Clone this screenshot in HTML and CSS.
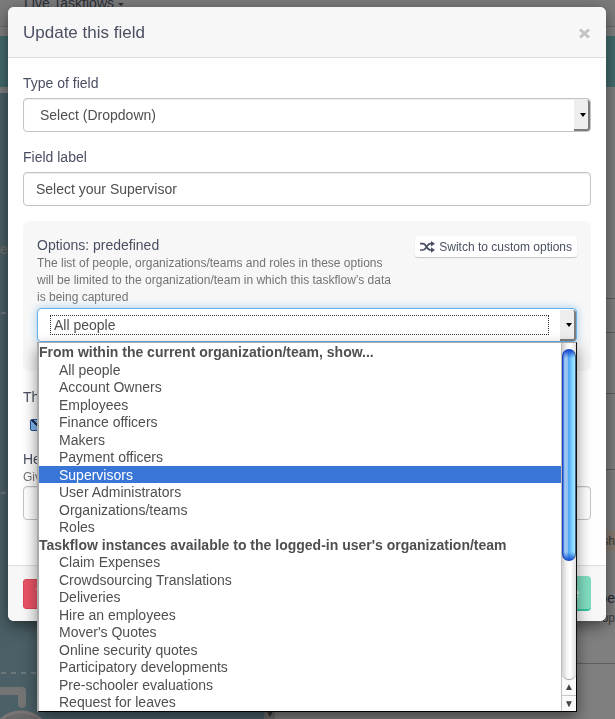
FILE: index.html
```html
<!DOCTYPE html>
<html lang="en">
<head>
  <meta charset="UTF-8" />
  <meta name="viewport" content="width=device-width, initial-scale=1.0"/>
  <title>Update this field</title>
  <link rel="stylesheet" href="styles.css">
</head>
<body>
  <!-- Page behind the modal -->
  <div class="page" aria-hidden="true">
    <div class="navbar">
      <span class="nav-item">Live Taskflows <i class="caret"></i></span>
    </div>
    <div class="banner"></div>
    <div class="workspace">
      <div class="canvas">
        <span class="canvas-text">er</span>
        <svg class="canvas-art" width="264" height="626" viewBox="0 0 264 626">
          <g stroke="#6c7779" stroke-width="2" stroke-dasharray="5 5">
            <path d="M1 220H264M1 400H264M1 580H264"/>
          </g>
          <path d="M-4 598H22V611" fill="none" stroke="#747474" stroke-width="8" stroke-linecap="round" stroke-linejoin="round"/>
          <circle cx="21" cy="649" r="30" fill="#696969" stroke="#7b7474" stroke-width="3"/>
        </svg>
      </div>
      <div class="canvas-scroll">▼</div>
      <div class="panel">
        <div class="panel-row row-intro"></div>
        <div class="panel-row row-short"></div>
        <div class="panel-row row-medium"></div>
        <div class="panel-row row-tall"></div>
        <div class="panel-row row-detail">
          <span class="tag">sh</span>
          <span class="detail-title">pe</span>
          <span class="detail-text">op</span>
        </div>
      </div>
    </div>
  </div>

  <div class="modal-wrap">
    <div class="modal" role="dialog" aria-labelledby="modal-title">
      <div class="modal-header">
        <h1 class="modal-title" id="modal-title">Update this field</h1>
        <button type="button" class="close" aria-label="Close">
          <svg width="13" height="13" viewBox="0 0 13 13"><path d="M2 2.500L11 10.500M11 2.500L2 10.500" stroke="#c3c3c3" stroke-width="3"/></svg>
        </button>
      </div>

      <form class="modal-body">
        <div class="form-group">
          <label class="form-label" for="field-type">Type of field</label>
          <div class="select-box">
            <select id="field-type" class="form-input form-select">
              <option>Select (Dropdown)</option>
            </select>
          </div>
        </div>

        <div class="form-group">
          <label class="form-label" for="field-label">Field label</label>
          <input type="text" id="field-label" class="form-input" value="Select your Supervisor" />
        </div>

        <div class="well">
          <div class="well-head">
            <div class="well-text">
              <label class="well-title" for="options-source">Options: predefined</label>
              <p class="help">The list of people, organizations/teams and roles in these options will be limited to the organization/team in which this taskflow’s data is being captured</p>
            </div>
            <button type="button" class="switch-btn">
              <svg width="15" height="12" viewBox="0 0 15 12">
                <path d="M0 2.700H3C6.500 2.700 6.500 9 10.500 9H11.500M0 9H3C6.500 9 6.500 2.700 10.500 2.700H11.500" fill="none" stroke="#4a5062" stroke-width="1.700"/>
                <path d="M11 0L15 2.700L11 5.400ZM11 6.300L15 9L11 11.700Z" fill="#4a5062"/>
              </svg>
              Switch to custom options
            </button>
          </div>

          <div class="select-box is-open">
            <select id="options-source" class="form-input form-select">
              <option>All people</option>
            </select>
            <div class="focus-ring"></div>
            <div class="popup">
              <ul class="popup-list" role="listbox" aria-label="Options">
                <li class="group">From within the current organization/team, show...</li>
                <li class="option" role="option">All people</li>
                <li class="option" role="option">Account Owners</li>
                <li class="option" role="option">Employees</li>
                <li class="option" role="option">Finance officers</li>
                <li class="option" role="option">Makers</li>
                <li class="option" role="option">Payment officers</li>
                <li class="option active" role="option" aria-selected="true">Supervisors</li>
                <li class="option" role="option">User Administrators</li>
                <li class="option" role="option">Organizations/teams</li>
                <li class="option" role="option">Roles</li>
                <li class="group">Taskflow instances available to the logged-in user's organization/team</li>
                <li class="option" role="option">Claim Expenses</li>
                <li class="option" role="option">Crowdsourcing Translations</li>
                <li class="option" role="option">Deliveries</li>
                <li class="option" role="option">Hire an employees</li>
                <li class="option" role="option">Mover's Quotes</li>
                <li class="option" role="option">Online security quotes</li>
                <li class="option" role="option">Participatory developments</li>
                <li class="option" role="option">Pre-schooler evaluations</li>
                <li class="option" role="option">Request for leaves</li>
              </ul>
              <div class="scrollbar">
                <div class="track"><div class="thumb"></div></div>
                <div class="arrow">▲</div>
                <div class="arrow">▼</div>
              </div>
            </div>
          </div>
        </div>

        <div class="form-group">
          <label class="form-label" for="required">This</label>
          <div class="check"><input type="checkbox" id="required" checked /></div>
        </div>

        <div class="form-group last">
          <label class="form-label tight" for="help-text">Help</label>
          <p class="help">Give</p>
          <input type="text" id="help-text" class="form-input" />
        </div>
      </form>

      <div class="modal-footer">
        <button type="button" class="btn btn-danger" aria-label="Delete">
          <svg width="12" height="13" viewBox="0 0 12 13"><path d="M0 2H12M4 2V0.500H8V2M2 4V12H10V4M4.500 5V10M7.500 5V10" fill="none" stroke="#f6c4ca" stroke-width="1"/></svg>
        </button>
        <button type="button" class="btn btn-save">Save</button>
      </div>
    </div>
  </div>
</body>
</html>
```

FILE: styles.css
```css
* {
  margin: 0;
  padding: 0;
  box-sizing: border-box;
}

body {
  font-family: "Liberation Sans", Arial, sans-serif;
  font-size: 14px;
  line-height: 20px;
  color: #4a5062;
  height: 100vh;
  overflow: hidden;
  background: #7f7f7f;
}

/* Dimmed page */
.page {
  height: 100vh;
  display: flex;
  flex-direction: column;
  overflow: hidden;
}

.navbar {
  height: 27px;
  flex: none;
  padding-left: 24px;
  line-height: 6px;
  color: #2b2e38;
  background: #7b7b7b;
  border-bottom: 1px solid #6a6a6a;
}

.caret {
  display: inline-block;
  vertical-align: middle;
  border: 3px solid transparent;
  border-top-color: #2b2e38;
  border-bottom: 0;
}

.banner {
  height: 51px;
  flex: none;
  margin: 9px 0 6px;
  background: #436b6c;
}

.workspace {
  flex: 1;
  display: flex;
  min-height: 0;
}

.canvas {
  position: relative;
  flex: 0 0 43%;
  overflow: hidden;
  background: #4a6066;
}

.canvas-art {
  position: absolute;
  top: 0;
  left: 0;
}

.canvas-text {
  display: block;
  padding-top: 146px;
  color: #77706e;
}

.canvas-scroll {
  width: 11px;
  display: flex;
  align-items: flex-end;
  justify-content: center;
  background: #6d6d6d;
  color: #333333;
  font-size: 9px;
  line-height: 9px;
}

.panel {
  flex: 1;
}

.panel-row {
  border-bottom: 1px solid #5e5e5e;
}

.row-intro { height: 206px; }
.row-short { height: 34px; }
.row-medium { height: 61px; }
.row-tall { height: 76px; }

.row-detail {
  height: 194px;
  padding-top: 61px;
  display: flex;
  flex-direction: column;
  align-items: flex-end;
  line-height: 20px;
  color: #3a3a3a;
}

.row-detail .tag {
  background: #857a70;
  font-size: 12px;
}

.row-detail .detail-title {
  margin-top: 37px;
  color: #25282f;
}

.row-detail .detail-text {
  font-size: 12px;
}

/* Modal */
.modal-wrap {
  position: fixed;
  inset: 0;
  padding: 7px 9px 0 8px;
}

.modal {
  background: #ffffff;
  border-radius: 6px;
  box-shadow: 0 5px 15px rgba(0, 0, 0, 0.5);
}

.modal-header {
  display: flex;
  align-items: center;
  justify-content: space-between;
  padding: 16px 15px 14px;
  background: #f7f7f7;
  border-bottom: 1px solid #dddddd;
  border-radius: 6px 6px 0 0;
}

.modal-title {
  font-size: 17px;
  font-weight: normal;
  line-height: 20px;
}

.close {
  display: flex;
  border: none;
  background: none;
  cursor: pointer;
}

.modal-body {
  padding: 15px 15px 45px;
}

.form-group {
  margin-bottom: 15px;
}

.form-group.last {
  margin-bottom: 0;
}

.form-label {
  display: block;
  margin-bottom: 5px;
}

.form-label.tight {
  margin-bottom: 0;
}

.form-input {
  display: block;
  width: 100%;
  height: 34px;
  padding: 6px 12px;
  border: 1px solid #c4c4c4;
  border-radius: 4px;
  background: #ffffff;
  box-shadow: inset 0 1px 1px rgba(0, 0, 0, 0.08);
  font-family: inherit;
  font-size: 14px;
  color: #4f4f4f;
}

.select-box {
  position: relative;
}

.form-select {
  appearance: none;
  padding: 6px 16px;
}

/* Arrow button of the select */
.select-box::before {
  content: "";
  position: absolute;
  top: 2px;
  right: 1px;
  bottom: 1px;
  width: 14px;
  background: #eeeeee;
  border-right: 2px solid #7d7d7d;
  border-bottom: 2px solid #7d7d7d;
  border-radius: 0 3px 3px 0;
  pointer-events: none;
}

.select-box::after {
  content: "";
  position: absolute;
  top: 15px;
  right: 5px;
  border: 3px solid transparent;
  border-top: 4px solid #000000;
  border-bottom: 0;
  pointer-events: none;
}

.is-open .form-select {
  border-color: #66afe9;
  box-shadow: 0 0 8px rgba(102, 175, 233, 0.6);
}

.focus-ring {
  position: absolute;
  inset: 7px 28px 7px 13px;
  border: 1px dotted #333333;
  pointer-events: none;
}

.well {
  padding: 14px 14px 29px;
  margin-bottom: 16px;
  background: #f7f7f7;
  border-radius: 6px;
}

.well-head {
  display: flex;
  justify-content: space-between;
  align-items: flex-start;
  margin-bottom: 2px;
}

.well-text {
  flex: 0 1 360px;
}

.well-title {
  display: block;
}

.help {
  font-size: 12px;
  line-height: 17px;
  color: #737373;
}

.switch-btn {
  display: flex;
  align-items: center;
  gap: 4px;
  flex: none;
  height: 21px;
  margin-top: 1px;
  padding: 0 5px;
  border: none;
  border-radius: 3px;
  background: #ffffff;
  box-shadow: 0 1px 1px rgba(0, 0, 0, 0.2);
  font-family: inherit;
  font-size: 12px;
  color: #4a5062;
  cursor: pointer;
}

/* Open drop-down list */
.popup {
  position: absolute;
  top: 100%;
  left: 0;
  right: 0;
  z-index: 2;
  display: flex;
  height: 370px;
  background: #ffffff;
  border: 1px solid #000000;
  border-top-color: #aaaaaa;
  border-left: 2px solid #aaaaaa;
  box-shadow: 0 6px 14px rgba(0, 0, 0, 0.45);
}

.popup-list {
  flex: 1;
  display: grid;
  grid-auto-rows: 1fr;
  list-style: none;
  line-height: 19px;
  color: #4f4f4f;
}

.popup-list li {
  min-height: 0;
  white-space: nowrap;
}

.group {
  font-weight: bold;
}

.option {
  padding-left: 20px;
}

.option.active {
  background: #3875d7;
  color: #ffffff;
}

.scrollbar {
  width: 15px;
  display: flex;
  flex-direction: column;
  border-left: 1px solid #c2c2c2;
  background: #fafafa;
}

.track {
  flex: 1;
  padding-top: 6px;
  border-radius: 0 0 7px 7px;
  background: linear-gradient(90deg, #cfcfcf, #f4f4f4 35%, #ffffff 60%, #dedede);
  box-shadow: 0 1px 1px #999999;
}

.thumb {
  height: 212px;
  border: 1px solid #1b44c4;
  border-right-color: #46607c;
  border-radius: 7px;
  background:
    linear-gradient(180deg, #1647cd, transparent 8px, transparent 202px, #1557d2),
    linear-gradient(90deg, #2a62dc 0, #a4caf2 15%, #92c0f0 38%, #4da3f4 42%, #65b8fb 60%, #98e4ff 90%);
}

.arrow {
  height: 16px;
  border-top: 1px solid #c8c8c8;
  text-align: center;
  font-size: 10px;
  line-height: 15px;
  color: #444444;
}

.track + .arrow {
  border-top: 0;
}

.check {
  display: flex;
  align-items: center;
  height: 22px;
  padding: 3px 0 0 7px;
}

.check input {
  appearance: none;
  width: 12px;
  height: 12px;
  border: 1px solid #2d4f8c;
  border-radius: 2px;
  background: linear-gradient(45deg, transparent 45%, #1c2f52 46%, #1c2f52 62%, transparent 63%), #83b9f3;
}

.modal-footer {
  display: flex;
  justify-content: space-between;
  align-items: center;
  height: 56px;
  padding: 0 15px;
  background: #f7f7f7;
  border-top: 1px solid #dddddd;
  border-radius: 0 0 6px 6px;
}

.btn {
  display: flex;
  align-items: center;
  padding: 0 12px;
  height: 30px;
  border: 1px solid #d94558;
  border-radius: 3px;
  background: #ea5467;
  font-family: inherit;
  font-size: 14px;
  color: #ffffff;
  cursor: pointer;
}

.btn-save {
  height: 35px;
  border: none;
  border-bottom: 2px solid #35c69b;
  border-radius: 4px;
  background: #80dec3;
}
```
